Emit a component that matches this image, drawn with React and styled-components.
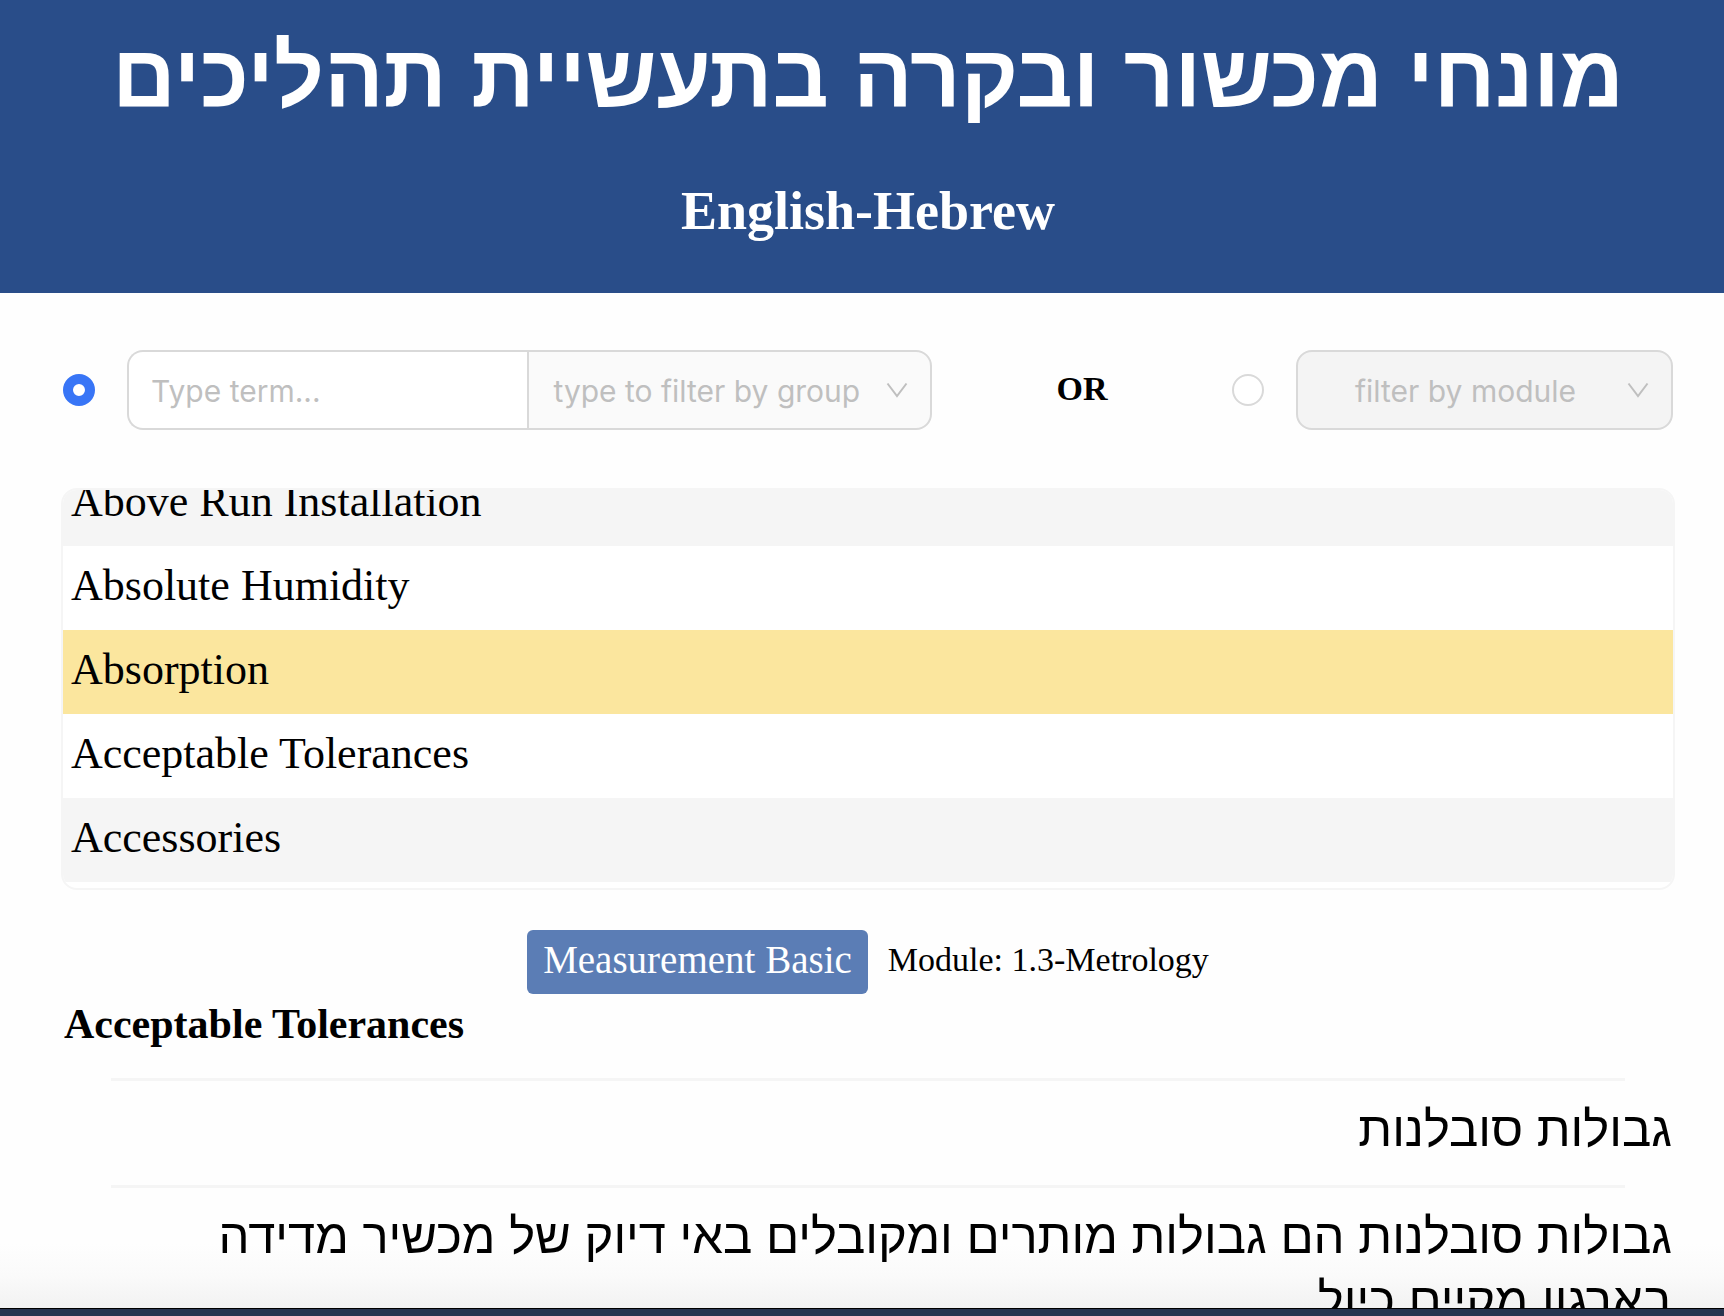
import React, { useState } from 'react';
import styled, { createGlobalStyle } from 'styled-components';

const serif = `'Liberation Serif', serif`;
const hebrew = `'Liberation Sans', sans-serif`;
const ui = `Inter, sans-serif`;

const GlobalStyle = createGlobalStyle`
  * { box-sizing: border-box; }
  body { margin: 0; background: #fefefe; color: #000; font-family: ${serif}; }
`;

const Page = styled.div`
  display: flex;
  flex-direction: column;
  height: 100vh;
  overflow: hidden;
`;

const Header = styled.header`
  padding: 24px 0 50px 12px;
  background: #294d89;
  color: #fff;
  text-align: center;
`;

const Title = styled.h1`
  margin: 0 0 51px;
  font: 700 88px/104px ${hebrew};
`;

const Subtitle = styled.h2`
  margin: 0;
  font: 700 54px/64px ${serif};
`;

const Main = styled.main`
  flex: 1;
  min-height: 0;
  overflow: hidden;
  padding: 57px 49px 0 61px;
  background: linear-gradient(to top, #f2f2f2, #fafafa 32px, #fefefe 64px);
`;

const Filters = styled.form`
  display: grid;
  grid-template-columns: 869fr 300fr 441fr;
  align-items: center;
  padding: 0 2px;
  margin-bottom: 58px;
`;

const FilterSet = styled.div`
  display: flex;
  align-items: center;
  gap: 32px;
`;

const Radio = styled.input`
  appearance: none;
  flex: none;
  width: 32px;
  height: 32px;
  margin: 0;
  border: 2px solid #d9d9d9;
  border-radius: 50%;
  background: #fff;

  &:checked {
    border: 10px solid #3875f6;
  }
`;

const Or = styled.span`
  padding-bottom: 2px;
  text-align: center;
  font: 700 34px/40px ${serif};
`;

const Compact = styled.div`
  display: grid;
  grid-template-columns: 100fr 101fr;
  flex: 1;
  min-width: 0;
`;

const TermInput = styled.input`
  min-width: 0;
  height: 80px;
  padding: 2px 22px 0;
  border: 2px solid #d9d9d9;
  border-right: 0;
  border-radius: 16px 0 0 16px;
  background: #fff;
  font: 400 30px/40px ${ui};

  &::placeholder { color: #bfbfbf; opacity: 1; }
`;

const SelectBox = styled.div`
  position: relative;
  flex: 1;
  min-width: 0;
`;

const Select = styled.select`
  appearance: none;
  display: block;
  width: 100%;
  height: 80px;
  padding: 2px ${(p) => (p.$centered ? 62 : 48)}px 0 24px;
  border: 2px solid #d9d9d9;
  border-radius: ${(p) => (p.$joined ? '0 16px 16px 0' : '16px')};
  background: ${(p) => (p.$joined ? '#fafafa' : '#f4f4f4')};
  color: #bfbfbf;
  opacity: 1;
  font: 400 30px/40px ${ui};
  text-align-last: ${(p) => (p.$centered ? 'center' : 'left')};
`;

const Arrow = styled.svg`
  position: absolute;
  top: 32px;
  right: 24px;
  width: 22px;
  height: 16px;
  pointer-events: none;
`;

const TermList = styled.ul`
  display: flex;
  flex-direction: column;
  justify-content: flex-end;
  height: 402px;
  margin: 0 0 40px;
  padding: 0 0 6px;
  overflow: hidden;
  list-style: none;
  border: 2px solid #f5f5f5;
  border-radius: 16px;
  background: #fff;
`;

const Term = styled.li`
  flex: none;
  padding: 0 8px 4px;
  font: 400 44px/80px ${serif};

  &:nth-child(odd) { background: #f5f5f5; }
  &&[aria-current] { background: #fbe69e; }
`;

const Meta = styled.div`
  display: flex;
  justify-content: center;
  gap: 20px;
`;

const Tag = styled.span`
  padding: 0 16px 4px;
  border-radius: 6px;
  background: #5b7db5;
  color: #fff;
  font: 400 39px/60px ${serif};
`;

const Module = styled.span`
  font: 400 34px/60px ${serif};
`;

const Heading = styled.h3`
  margin: 0;
  padding: 0 3px;
  font: 700 42px/60px ${serif};
`;

const Divider = styled.hr`
  height: 3px;
  margin: 24px 50px 16px;
  border: 0;
  background: #f5f5f5;
`;

const Hebrew = styled.p`
  margin: 0;
  padding: 0 3px 0 24px;
  font: 400 49px/64px ${hebrew};
`;

const BottomBar = styled.footer`
  flex: none;
  height: 8px;
  border-top: 1px solid #000;
  background: #28344f;
`;

const terms = [
  'Above Run Installation',
  'Absolute Humidity',
  'Absorption',
  'Acceptable Tolerances',
  'Accessories',
];

function Chevron() {
  return (
    <Arrow viewBox="0 0 22 16" fill="none" aria-hidden="true">
      <path d="M1.5 1.5 L11 14 L20.5 1.5" stroke="#bfbfbf" strokeWidth="2" />
    </Arrow>
  );
}

export default function App() {
  const [mode, setMode] = useState('term');
  const [term, setTerm] = useState('');

  return (
    <Page>
      <GlobalStyle />
      <Header>
        <Title lang="he" dir="rtl">מונחי מכשור ובקרה בתעשיית תהליכים</Title>
        <Subtitle>English-Hebrew</Subtitle>
      </Header>
      <Main>
        <Filters>
          <FilterSet>
            <Radio type="radio" name="mode" aria-label="Type term" checked={mode === 'term'} onChange={() => setMode('term')} />
            <Compact>
              <TermInput
                type="text"
                aria-label="Type term"
                placeholder="Type term..."
                value={term}
                onChange={(e) => setTerm(e.target.value)}
                disabled={mode !== 'term'}
              />
              <SelectBox>
                <Select $joined aria-label="type to filter by group" disabled={mode !== 'term'}>
                  <option>type to filter by group</option>
                </Select>
                <Chevron />
              </SelectBox>
            </Compact>
          </FilterSet>
          <Or>OR</Or>
          <FilterSet>
            <Radio type="radio" name="mode" aria-label="filter by module" checked={mode === 'module'} onChange={() => setMode('module')} />
            <SelectBox>
              <Select $centered aria-label="filter by module" disabled={mode !== 'module'}>
                <option>filter by module</option>
              </Select>
              <Chevron />
            </SelectBox>
          </FilterSet>
        </Filters>

        <TermList>
          {terms.map((t) => (
            <Term key={t} aria-current={t === 'Absorption' ? 'true' : undefined}>{t}</Term>
          ))}
        </TermList>

        <Meta>
          <Tag>Measurement Basic</Tag>
          <Module>Module: 1.3-Metrology</Module>
        </Meta>
        <Heading>Acceptable Tolerances</Heading>
        <Divider />
        <Hebrew lang="he" dir="rtl">גבולות סובלנות</Hebrew>
        <Divider />
        <Hebrew lang="he" dir="rtl">
          גבולות סובלנות הם גבולות מותרים ומקובלים באי דיוק של מכשיר מדידה בארגון מקיים כיול
        </Hebrew>
      </Main>
      <BottomBar />
    </Page>
  );
}
